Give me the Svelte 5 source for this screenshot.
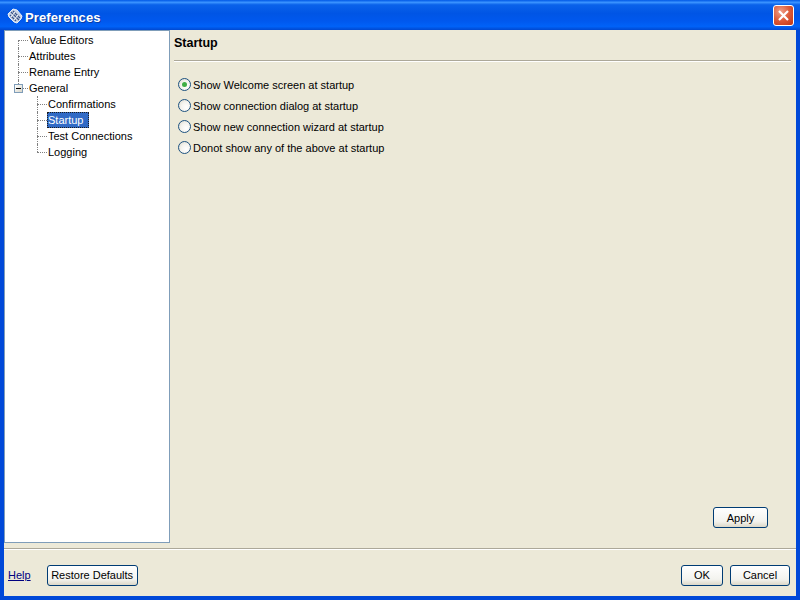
<script>
  let selected = $state("welcome");

  const startupOptions = [
    { id: "welcome", label: "Show Welcome screen at startup" },
    { id: "dialog", label: "Show connection dialog at startup" },
    { id: "wizard", label: "Show new connection wizard at startup" },
    { id: "none", label: "Donot show any of the above at startup" },
  ];

  const topItems = ["Value Editors", "Attributes", "Rename Entry"];
  const generalItems = ["Confirmations", "Startup", "Test Connections", "Logging"];
</script>

<div class="window">
  <header class="titlebar">
    <svg class="app-icon" width="16" height="16" viewBox="0 0 16 16">
      <path d="M1 6 L6 1 L10 2 L15 8 L14 11 L10 15 L7 14 L2 9 Z" fill="#c9d3e6" stroke="#e8eef8" stroke-width="1" />
      <path d="M4 4 L12 12 M6 3 L13 10 M3 7 L9 13" stroke="#3c5488" stroke-width="1.2" />
      <path d="M8 4 L4 9 M11 7 L7 12" stroke="#fff" stroke-width="1" />
    </svg>
    <span class="title">Preferences</span>
    <div class="close">
      <svg width="13" height="13" viewBox="0 0 13 13">
        <path d="M2 2 L11 11 M11 2 L2 11" stroke="#fff" stroke-width="2.2" />
      </svg>
    </div>
  </header>

  <div class="client">
    <div class="main">
      <nav class="tree">
        <ul class="level top">
          {#each topItems as item}
            <li class="row"><span class="stub"></span><span class="node">{item}</span></li>
          {/each}
          <li class="row general">
            <span class="stub"></span><span class="node">General</span>
            <span class="expander"><span class="minus"></span></span>
          </li>
        </ul>
        <ul class="level sub">
          {#each generalItems as item}
            <li class="row">
              <span class="stub"></span>
              <span class="node" class:current={item === "Startup"}>{item}</span>
            </li>
          {/each}
        </ul>
      </nav>

      <section class="page">
        <h1>Startup</h1>
        <div class="rule"></div>
        <div class="options">
          {#each startupOptions as opt}
            <label class="option">
              <input type="radio" name="startup" value={opt.id} bind:group={selected} />
              <span class="radio" class:on={selected === opt.id}></span>
              <span>{opt.label}</span>
            </label>
          {/each}
        </div>
        <div class="apply-row">
          <button type="button" class="apply">Apply</button>
        </div>
      </section>
    </div>

    <div class="rule footer-rule"></div>

    <footer class="footer">
      <a href="#help" class="help">Help</a>
      <button type="button" class="restore">Restore Defaults</button>
      <div class="spacer"></div>
      <button type="button" class="ok">OK</button>
      <button type="button" class="cancel">Cancel</button>
    </footer>
  </div>
</div>

<style>
  :global(body) {
    margin: 0;
    background: #0053e1;
  }

  .window {
    width: 800px;
    height: 600px;
    display: flex;
    flex-direction: column;
    font-family: "Liberation Sans", Arial, sans-serif;
    font-size: 11px;
    color: #000;
    background: #0048d8;
    box-sizing: border-box;
    overflow: hidden;
  }

  .titlebar {
    height: 30px;
    flex: none;
    box-sizing: border-box;
    display: flex;
    align-items: center;
    padding: 4px 6px 0 7px;
    background: linear-gradient(180deg, #0058e6 0%, #3a93ff 8%, #0a62ea 16%, #0055e5 45%, #0058ee 70%, #0062f8 88%, #0048d0 100%);
  }

  .app-icon {
    flex: none;
    margin: -2px 2px 0 0;
  }

  .title {
    font-size: 13px;
    font-weight: bold;
    color: #fff;
    text-shadow: 1px 1px 0 #0a3fa8;
    letter-spacing: 0.1px;
  }

  .close {
    margin-left: auto;
    margin-top: -3px;
    width: 21px;
    height: 21px;
    box-sizing: border-box;
    border: 1px solid #fff;
    border-radius: 3px;
    background: radial-gradient(circle at 35% 30%, #f0a08a 0%, #dc5a38 50%, #bf3413 100%);
    display: flex;
    align-items: center;
    justify-content: center;
  }

  .client {
    flex: 1;
    margin: 0 4px 4px;
    min-height: 0;
    display: flex;
    flex-direction: column;
    background: #ece9d8;
  }

  .main {
    flex: none;
    height: 513px;
    display: flex;
  }

  .tree {
    width: 164px;
    flex: none;
    background: #fff;
    border: 1px solid #7f9db9;
    padding-top: 1px;
    height: 510px;
  }

  .level {
    list-style: none;
    margin: 0;
    padding: 0;
  }

  .top {
    margin-left: 13px;
  }

  .sub {
    margin-left: 32px;
  }

  .row {
    height: 16px;
    display: flex;
    align-items: center;
    position: relative;
  }

  /* tree guide line, one piece per row */
  .row::before {
    content: "";
    position: absolute;
    left: 0;
    top: 0;
    height: 16px;
    border-left: 1px dotted #808080;
  }

  .top .row:first-child::before {
    top: 8px;
    height: 8px;
  }

  .row:last-child::before {
    height: 8px;
  }

  .stub {
    width: 10px;
    flex: none;
    border-top: 1px dotted #808080;
  }

  .node {
    padding: 0 6px 0 1px;
    height: 16px;
    line-height: 16px;
    white-space: nowrap;
  }

  .current {
    background: #316ac5;
    color: #fff;
    outline: 1px dotted #1c1c1c;
    outline-offset: -1px;
  }

  .expander {
    position: absolute;
    left: -4px;
    top: 4px;
    width: 9px;
    height: 9px;
    box-sizing: border-box;
    border: 1px solid #7f9db9;
    background: linear-gradient(135deg, #fff, #d8d5c8);
    display: flex;
    align-items: center;
    justify-content: center;
  }

  .minus {
    width: 5px;
    height: 1px;
    background: #000;
  }

  .page {
    flex: 1;
    display: flex;
    flex-direction: column;
    padding: 0 5px 0 4px;
    min-width: 0;
  }

  h1 {
    font-family: "Liberation Sans", Arial, sans-serif;
    font-size: 12.5px;
    font-weight: bold;
    margin: 6px 0 0;
    height: 24px;
    line-height: 15px;
  }

  .rule {
    height: 1px;
    background: #aca899;
    box-shadow: 0 1px 0 #fff;
    flex: none;
  }

  .options {
    margin-top: 17px;
    padding-left: 4px;
    display: flex;
    flex-direction: column;
    gap: 8px;
  }

  .option {
    height: 13px;
    display: flex;
    align-items: center;
    gap: 2px;
    white-space: nowrap;
  }

  .option input {
    display: none;
  }

  .radio {
    width: 13px;
    height: 13px;
    box-sizing: border-box;
    border: 1px solid #1d5281;
    border-radius: 50%;
    background: radial-gradient(circle at 65% 65%, #fff 0%, #f4f3ee 50%, #d8d6c8 100%);
    display: flex;
    align-items: center;
    justify-content: center;
    flex: none;
  }

  .radio.on::after {
    content: "";
    width: 5px;
    height: 5px;
    border-radius: 50%;
    background: #3fae45;
  }

  .apply-row {
    margin-top: auto;
    display: flex;
    justify-content: flex-end;
    padding: 0 23px 15px 0;
  }

  button {
    font: inherit;
    color: #000;
    height: 21px;
    padding: 0;
    border: 1px solid #003c74;
    border-radius: 3px;
    background: linear-gradient(180deg, #fff 0%, #f3f3ee 70%, #dcd8c8 100%);
  }

  .apply {
    width: 55px;
  }

  .footer-rule {
    margin-top: 5px;
  }

  .footer {
    flex: 1;
    display: flex;
    align-items: center;
    padding: 5px 6px 0 4px;
  }

  .help {
    color: #000080;
    text-decoration: underline;
    margin-right: 16px;
  }

  .restore {
    width: 91px;
  }

  .spacer {
    flex: 1;
  }

  .ok {
    width: 42px;
    margin-right: 7px;
  }

  .cancel {
    width: 60px;
  }
</style>
